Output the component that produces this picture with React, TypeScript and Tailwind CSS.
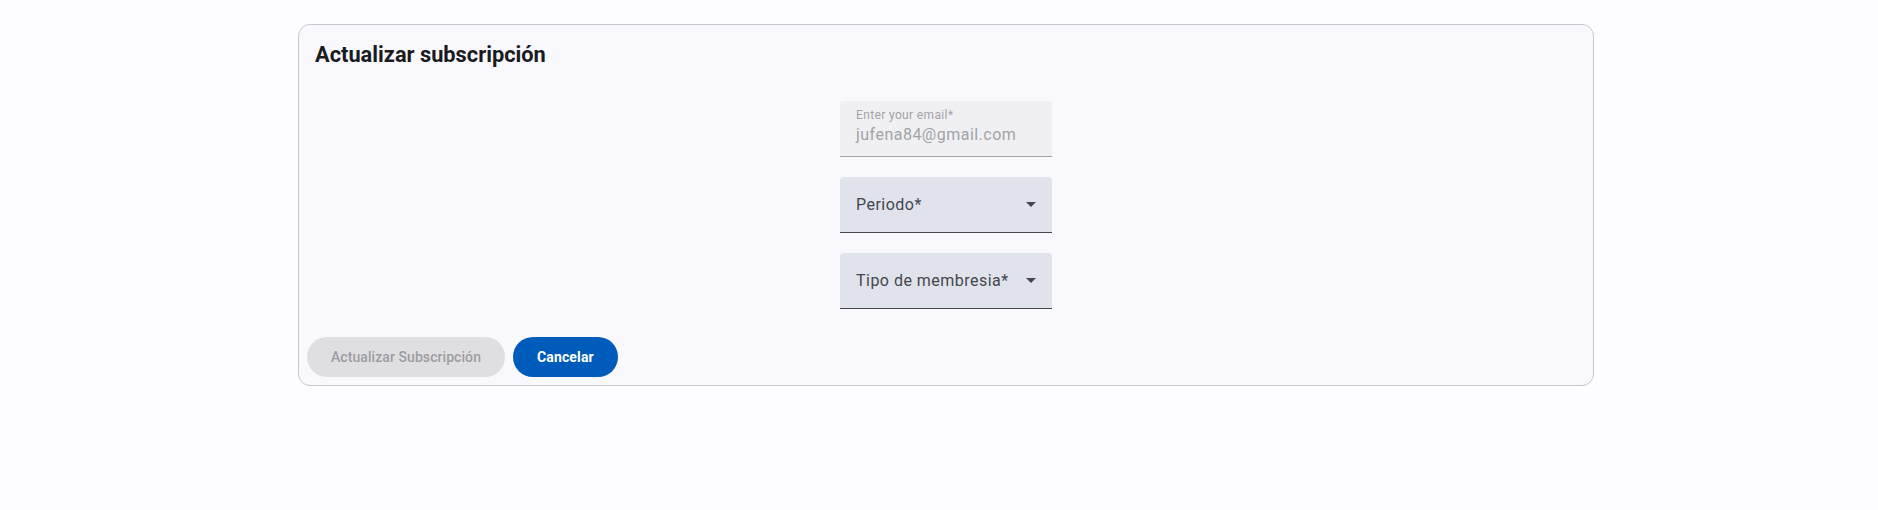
import React from 'react';

function SelectField({ label }: { label: string }) {
  return (
    <div className="relative flex h-[56px] w-[212px] items-center justify-between rounded-t-[4px] border-b border-[#44474e] bg-[#e0e2ec] pl-4 pr-4">
      <span className="text-[16px] leading-6 tracking-[0.03em] text-[#44474e]">{label}</span>
      <svg width="10" height="5" viewBox="0 0 10 5" className="text-[#44474e]">
        <path d="M0 0 L5 5 L10 0 Z" fill="currentColor" />
      </svg>
    </div>
  );
}

export default function App() {
  return (
    <div className="min-h-[510px] bg-[#fdfcfe] pt-[24px] font-['Roboto','Liberation_Sans',sans-serif]">
      <div className="ml-[298px] w-[1296px] rounded-[12px] border border-[#c8c7d0] bg-[#f9f8fc] pb-[8px]">
        <h2 className="px-4 pt-4 text-[21.8px] leading-7 font-bold text-[#1a1b1f]">Actualizar subscripción</h2>

        <div className="mt-[32px] flex flex-col items-center gap-[20px]">
          <div className="flex h-[56px] w-[212px] flex-col rounded-t-[4px] border-b border-[#a3a3a8] bg-[#f0f0f3] px-4 pt-[6px]">
            <span className="text-[12px] leading-4 tracking-[0.03em] text-[#a2a3a7]">Enter your email*</span>
            <span className="text-[16px] leading-6 tracking-[0.03em] text-[#a2a3a7]">jufena84@gmail.com</span>
          </div>
          <SelectField label="Periodo*" />
          <SelectField label="Tipo de membresia*" />
        </div>

        <div className="mt-[28px] flex gap-2 pl-2">
          <button
            disabled
            className="h-10 rounded-full bg-[#dfdfe2] px-6 text-[14px] font-medium tracking-[0.005em] text-[#9c9da1]"
          >
            Actualizar Subscripción
          </button>
          <button className="h-10 rounded-full bg-[#005cbb] px-6 text-[14px] font-bold tracking-[0.01em] text-white">
            Cancelar
          </button>
        </div>
      </div>
    </div>
  );
}
